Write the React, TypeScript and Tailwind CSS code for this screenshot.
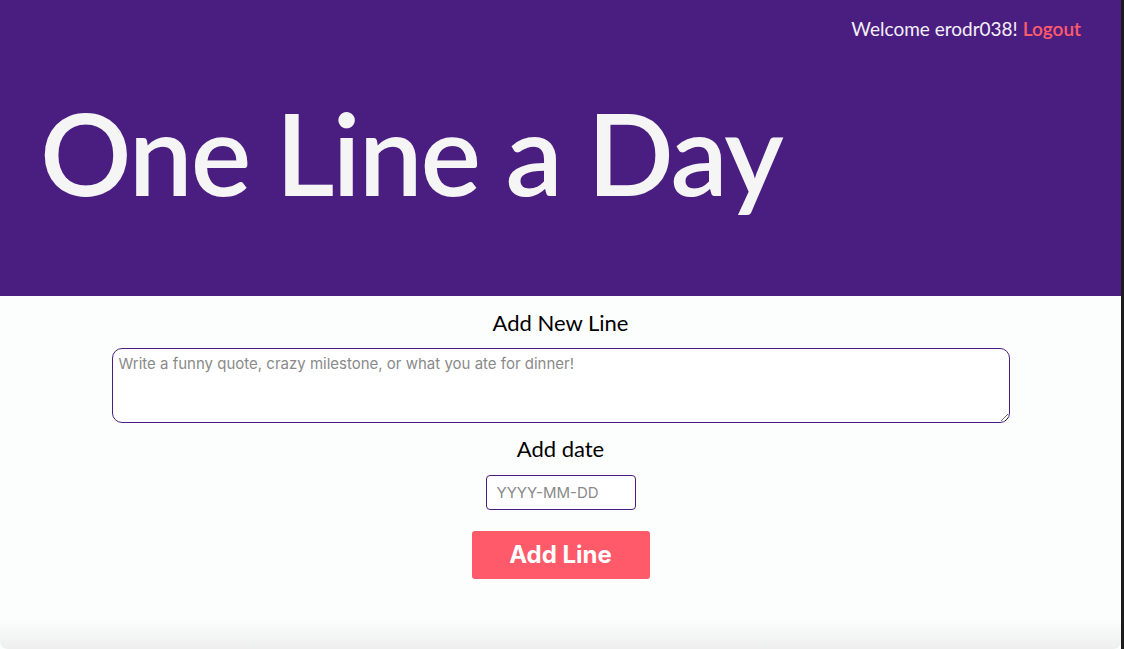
import React from "react";

export default function App() {
  return (
    <div className="flex h-[649px] w-[1124px] overflow-hidden bg-[#1c1c1c]">
      <div className="relative flex h-full w-[1121px] flex-col bg-[#fcfefe] [font-family:Lato,'Noto_Sans',sans-serif]">
        <header className="flex h-[296px] flex-col bg-[#4a1e80] px-[40px]">
          <div className="flex justify-end pt-[17px] text-[19px] leading-[24px] text-[#f4f0f8]">
            <span>Welcome erodr038!</span>
            <a className="ml-[5px] font-semibold text-[#ff5b6b]">Logout</a>
          </div>
          <h1 className="mt-[41px] text-[114px] leading-[140px] font-semibold tracking-[-2px] text-[#f5f5f5]">
            One Line a Day
          </h1>
        </header>
        <main className="flex flex-col items-center pt-[3px]">
          <h2 className="mt-[10px] text-[22px] leading-[28px] text-black">Add New Line</h2>
          <textarea
            className="mt-[11px] h-[75px] w-[898px] rounded-[10px] border border-[#4a1e80] bg-white px-[6px] py-[5px] text-[15px] leading-[20px] text-black placeholder:text-[#8a8a8a] [font-family:Inter,sans-serif] outline-none"
            placeholder="Write a funny quote, crazy milestone, or what you ate for dinner!"
          />
          <h2 className="mt-[12px] text-[22px] leading-[28px] text-black">Add date</h2>
          <input
            className="mt-[12px] h-[35px] w-[150px] rounded-[4px] border border-[#4a1e80] bg-white px-[10px] text-[15px] text-black placeholder:text-[#8a8a8a] [font-family:Inter,sans-serif] outline-none"
            placeholder="YYYY-MM-DD"
          />
          <button className="mt-[21px] h-[48px] w-[178px] rounded-[3px] bg-[#fe5a6a] text-[24px] font-bold text-white [font-family:Inter,sans-serif]">
            Add Line
          </button>
        </main>
        <div className="absolute bottom-0 left-0 right-0 h-[30px] rounded-b-[8px] bg-gradient-to-b from-transparent to-[#eeeeee]" />
      </div>
    </div>
  );
}
